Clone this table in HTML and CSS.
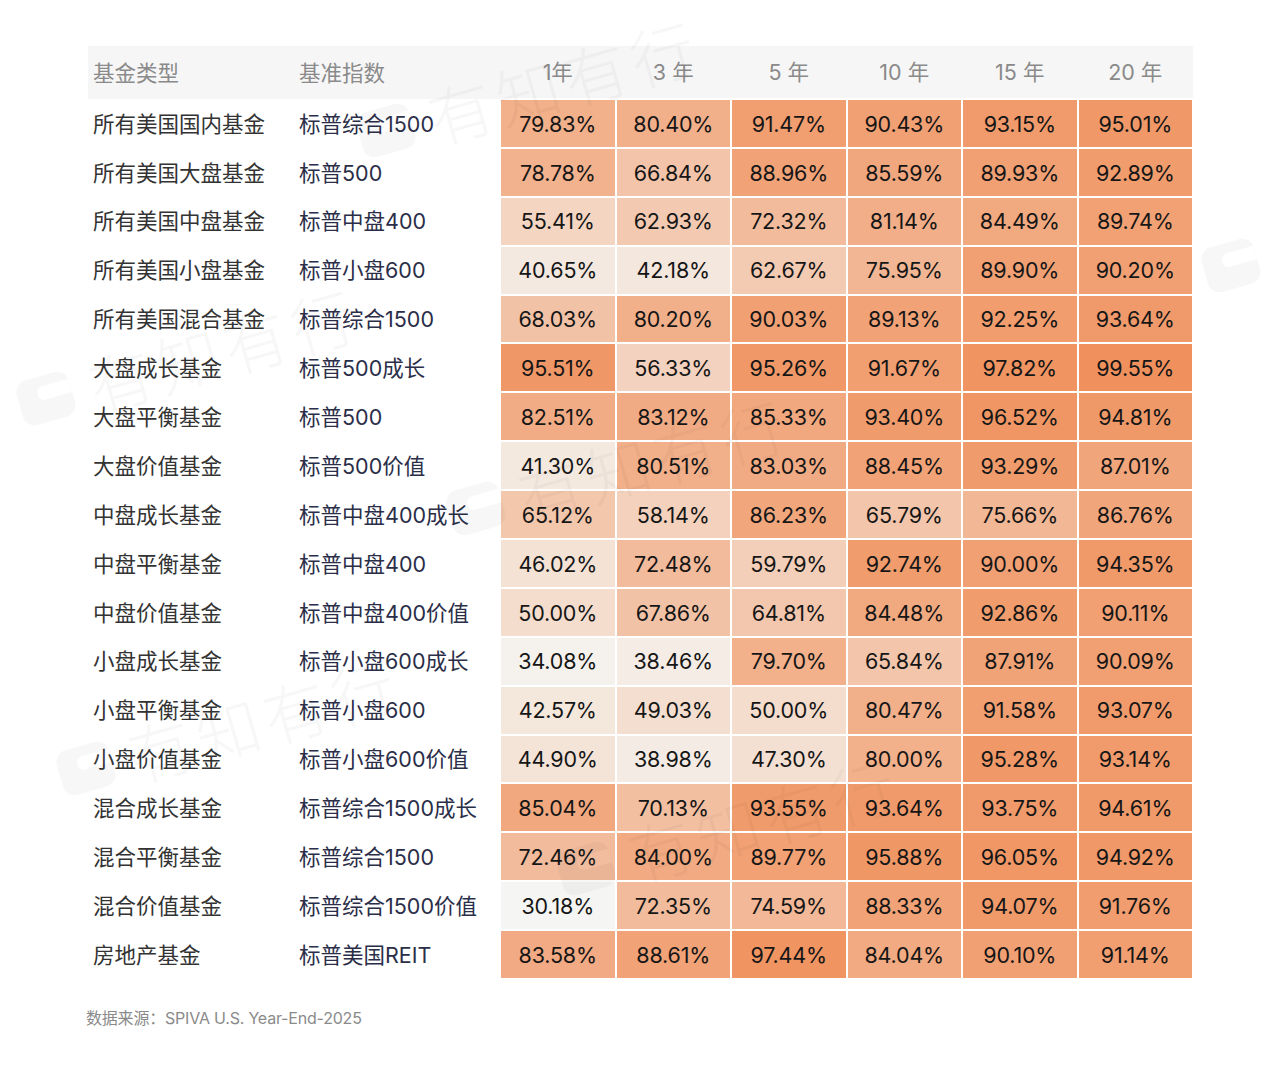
FILE: index.html
```html
<!DOCTYPE html>
<html lang="zh-CN">
<head>
<meta charset="utf-8">
<title>SPIVA 主动基金跑输基准比例</title>
<link rel="stylesheet" href="styles.css">
</head>
<body>
<main class="page">
  <table class="spiva">
    <thead>
      <tr>
        <th class="c-name">基金类型</th>
        <th class="c-bench">基准指数</th>
        <th class="c-val">1年</th>
        <th class="c-val">3 年</th>
        <th class="c-val">5 年</th>
        <th class="c-val">10 年</th>
        <th class="c-val">15 年</th>
        <th class="c-val">20 年</th>
      </tr>
    </thead>
    <tbody>
      <tr><td class="c-name">所有美国国内基金</td><td class="c-bench">标普综合1500</td><td class="v">79.83%</td><td class="v">80.40%</td><td class="v">91.47%</td><td class="v">90.43%</td><td class="v">93.15%</td><td class="v">95.01%</td></tr>
      <tr><td class="c-name">所有美国大盘基金</td><td class="c-bench">标普500</td><td class="v">78.78%</td><td class="v">66.84%</td><td class="v">88.96%</td><td class="v">85.59%</td><td class="v">89.93%</td><td class="v">92.89%</td></tr>
      <tr><td class="c-name">所有美国中盘基金</td><td class="c-bench">标普中盘400</td><td class="v">55.41%</td><td class="v">62.93%</td><td class="v">72.32%</td><td class="v">81.14%</td><td class="v">84.49%</td><td class="v">89.74%</td></tr>
      <tr><td class="c-name">所有美国小盘基金</td><td class="c-bench">标普小盘600</td><td class="v">40.65%</td><td class="v">42.18%</td><td class="v">62.67%</td><td class="v">75.95%</td><td class="v">89.90%</td><td class="v">90.20%</td></tr>
      <tr><td class="c-name">所有美国混合基金</td><td class="c-bench">标普综合1500</td><td class="v">68.03%</td><td class="v">80.20%</td><td class="v">90.03%</td><td class="v">89.13%</td><td class="v">92.25%</td><td class="v">93.64%</td></tr>
      <tr><td class="c-name">大盘成长基金</td><td class="c-bench">标普500成长</td><td class="v">95.51%</td><td class="v">56.33%</td><td class="v">95.26%</td><td class="v">91.67%</td><td class="v">97.82%</td><td class="v">99.55%</td></tr>
      <tr><td class="c-name">大盘平衡基金</td><td class="c-bench">标普500</td><td class="v">82.51%</td><td class="v">83.12%</td><td class="v">85.33%</td><td class="v">93.40%</td><td class="v">96.52%</td><td class="v">94.81%</td></tr>
      <tr><td class="c-name">大盘价值基金</td><td class="c-bench">标普500价值</td><td class="v">41.30%</td><td class="v">80.51%</td><td class="v">83.03%</td><td class="v">88.45%</td><td class="v">93.29%</td><td class="v">87.01%</td></tr>
      <tr><td class="c-name">中盘成长基金</td><td class="c-bench">标普中盘400成长</td><td class="v">65.12%</td><td class="v">58.14%</td><td class="v">86.23%</td><td class="v">65.79%</td><td class="v">75.66%</td><td class="v">86.76%</td></tr>
      <tr><td class="c-name">中盘平衡基金</td><td class="c-bench">标普中盘400</td><td class="v">46.02%</td><td class="v">72.48%</td><td class="v">59.79%</td><td class="v">92.74%</td><td class="v">90.00%</td><td class="v">94.35%</td></tr>
      <tr><td class="c-name">中盘价值基金</td><td class="c-bench">标普中盘400价值</td><td class="v">50.00%</td><td class="v">67.86%</td><td class="v">64.81%</td><td class="v">84.48%</td><td class="v">92.86%</td><td class="v">90.11%</td></tr>
      <tr><td class="c-name">小盘成长基金</td><td class="c-bench">标普小盘600成长</td><td class="v">34.08%</td><td class="v">38.46%</td><td class="v">79.70%</td><td class="v">65.84%</td><td class="v">87.91%</td><td class="v">90.09%</td></tr>
      <tr><td class="c-name">小盘平衡基金</td><td class="c-bench">标普小盘600</td><td class="v">42.57%</td><td class="v">49.03%</td><td class="v">50.00%</td><td class="v">80.47%</td><td class="v">91.58%</td><td class="v">93.07%</td></tr>
      <tr><td class="c-name">小盘价值基金</td><td class="c-bench">标普小盘600价值</td><td class="v">44.90%</td><td class="v">38.98%</td><td class="v">47.30%</td><td class="v">80.00%</td><td class="v">95.28%</td><td class="v">93.14%</td></tr>
      <tr><td class="c-name">混合成长基金</td><td class="c-bench">标普综合1500成长</td><td class="v">85.04%</td><td class="v">70.13%</td><td class="v">93.55%</td><td class="v">93.64%</td><td class="v">93.75%</td><td class="v">94.61%</td></tr>
      <tr><td class="c-name">混合平衡基金</td><td class="c-bench">标普综合1500</td><td class="v">72.46%</td><td class="v">84.00%</td><td class="v">89.77%</td><td class="v">95.88%</td><td class="v">96.05%</td><td class="v">94.92%</td></tr>
      <tr><td class="c-name">混合价值基金</td><td class="c-bench">标普综合1500价值</td><td class="v">30.18%</td><td class="v">72.35%</td><td class="v">74.59%</td><td class="v">88.33%</td><td class="v">94.07%</td><td class="v">91.76%</td></tr>
      <tr><td class="c-name">房地产基金</td><td class="c-bench">标普美国REIT</td><td class="v">83.58%</td><td class="v">88.61%</td><td class="v">97.44%</td><td class="v">84.04%</td><td class="v">90.10%</td><td class="v">91.14%</td></tr>
    </tbody>
  </table>
  <p class="source">数据来源：SPIVA U.S. Year-End-2025</p>
</main>

<div class="watermarks" aria-hidden="true">
  <div class="wm wm-1"><span class="wm-logo"></span><span class="wm-text">有知有行</span></div>
  <div class="wm wm-2"><span class="wm-logo"></span><span class="wm-text">有知有行</span></div>
  <div class="wm wm-3"><span class="wm-logo"></span><span class="wm-text">有知有行</span></div>
  <div class="wm wm-4"><span class="wm-logo"></span></div>
  <div class="wm wm-5"><span class="wm-logo"></span><span class="wm-text">有知有行</span></div>
  <div class="wm wm-6"><span class="wm-logo"></span><span class="wm-text">有知有行</span></div>
</div>
<script src="script.js"></script>
</body>
</html>
```

FILE: styles.css
```css
html, body {
  margin: 0;
  padding: 0;
  background: #ffffff;
}

body {
  font-family: Inter, "Noto Sans CJK SC", sans-serif;
  color: #1a1a1a;
  position: relative;
  overflow: hidden;
  height: 1069px;
}

.page {
  padding: 46px 0 0 88px;
}

.spiva {
  width: 1106px;
  border-collapse: collapse;
  table-layout: fixed;
}

.spiva th,
.spiva td {
  padding: 0;
  font-size: 21.5px;
  line-height: 1;
  white-space: nowrap;
}

.spiva thead tr {
  height: 53px;
  background: #f6f6f6;
}

.spiva th {
  font-weight: 400;
  color: #8a8a8a;
  padding-top: 2px;
}

.spiva tbody tr {
  height: 48.9px;
}

.spiva tbody td {
  padding-top: 2px;
}

.c-name {
  width: 206px;
  text-align: left;
  padding-left: 5px !important;
  box-sizing: border-box;
}

.c-bench {
  width: 206px;
  text-align: left;
  padding-left: 5px !important;
  box-sizing: border-box;
}

th.c-val {
  text-align: center;
}

td.c-name {
  color: #333333;
}

td.c-bench {
  color: #2b2e48;
}

td.v {
  text-align: center;
  color: #161616;
  border: 2px solid #ffffff;
  background: #f2b38f;
  letter-spacing: -0.2px;
}

.source {
  margin: 28px 0 0 -2px;
  font-size: 16px;
  line-height: 20px;
  color: #8a8a8a;
  letter-spacing: -0.2px;
}

/* faint repeating watermark */
.watermarks {
  position: absolute;
  inset: 0;
  pointer-events: none;
  overflow: hidden;
}

.wm {
  position: absolute;
  display: flex;
  align-items: center;
  gap: 18px;
  transform: rotate(-16deg);
  transform-origin: left center;
  opacity: 0.028;
}

.wm-logo {
  width: 54px;
  height: 46px;
  border-radius: 12px;
  background: #000;
  position: relative;
}

.wm-logo::after {
  content: "";
  position: absolute;
  left: 20px;
  top: 10px;
  width: 34px;
  height: 14px;
  border-radius: 6px 0 0 6px;
  background: #fff;
}

.wm-text {
  font-family: "Noto Sans CJK SC", sans-serif;
  font-weight: 300;
  font-size: 64px;
  color: #000;
  letter-spacing: 6px;
}

.wm-1 { left: 360px; top: 92px; }
.wm-2 { left: 20px; top: 360px; }
.wm-3 { left: 450px; top: 470px; }
.wm-4 { left: 1205px; top: 250px; }
.wm-5 { left: 60px; top: 730px; }
.wm-6 { left: 560px; top: 830px; }
```

FILE: script.js
```js
(function () {
  var cells = document.querySelectorAll('td.v');
  var vals = [];
  cells.forEach(function (c) { vals.push(parseFloat(c.textContent)); });
  var min = Math.min.apply(null, vals);
  var max = Math.max.apply(null, vals);
  var lo = [245, 246, 243];
  var hi = [240, 145, 93];
  cells.forEach(function (c, i) {
    var t = (vals[i] - min) / (max - min);
    t = Math.pow(t, 1.1);
    var rgb = lo.map(function (l, k) { return Math.round(l + (hi[k] - l) * t); });
    c.style.backgroundColor = 'rgb(' + rgb.join(',') + ')';
  });
})();
```
